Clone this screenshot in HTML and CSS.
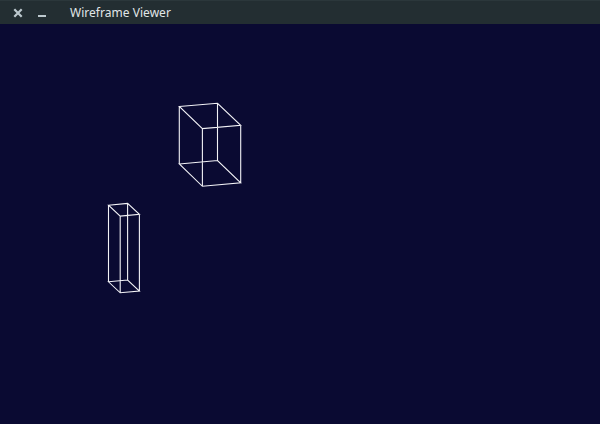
FILE: index.html
```html
<!DOCTYPE html>
<html lang="en">
<head>
<meta charset="utf-8">
<title>Wireframe Viewer</title>
<link rel="stylesheet" href="styles.css">
</head>
<body>
<main class="window">
  <header class="titlebar">
    <svg class="controls" width="70" height="24" viewBox="0 0 70 24" aria-hidden="true">
      <path d="M14.3 9.3l7.4 7.4M21.7 9.3l-7.4 7.4" stroke="#bcc8ce" stroke-width="2.2"/>
      <path d="M38 16h8" stroke="#bcc8ce" stroke-width="2"/>
    </svg>
    <h1 class="title">Wireframe Viewer</h1>
  </header>
  <svg class="viewport" width="600" height="400" viewBox="0 24 600 400">
    <g class="wire">
      <path d="M179.3 106.5L217.5 103.3L240.7 125.4L202.4 128.6ZM179.3 164L217.5 160.5L240.7 182.8L202.4 186.3ZM179.3 106.5V164M217.5 103.3V160.5M240.7 125.4V182.8M202.4 128.6V186.3"/>
      <path d="M108.5 205.2L127.6 203.4L139.4 214.4L120.2 216.1ZM108.5 281.8L127.6 280L139.4 291L120.2 292.8ZM108.5 205.2V281.8M127.6 203.4V280M139.4 214.4V291M120.2 216.1V292.8"/>
    </g>
  </svg>
</main>
</body>
</html>
```
FILE: styles.css
```css
body {
  margin: 0;
  background: #0a0a32;
}
.window {
  display: flex;
  flex-direction: column;
  width: 600px;
  height: 424px;
  overflow: hidden;
}
.titlebar {
  display: flex;
  box-sizing: border-box;
  height: 24px;
  background: linear-gradient(#2b373b 0 1px, #232e32 1px);
}
.controls {
  flex: none;
}
.title {
  margin: 0;
  color: #e0e6e8;
  font: 400 12px/25px "Noto Sans", "Open Sans", sans-serif;
  letter-spacing: 0.03px;
  white-space: nowrap;
}
.viewport {
  display: block;
  background: #0a0a32;
}
.wire {
  fill: none;
  stroke: #f2f2f6;
  stroke-width: 1.1;
}
```
